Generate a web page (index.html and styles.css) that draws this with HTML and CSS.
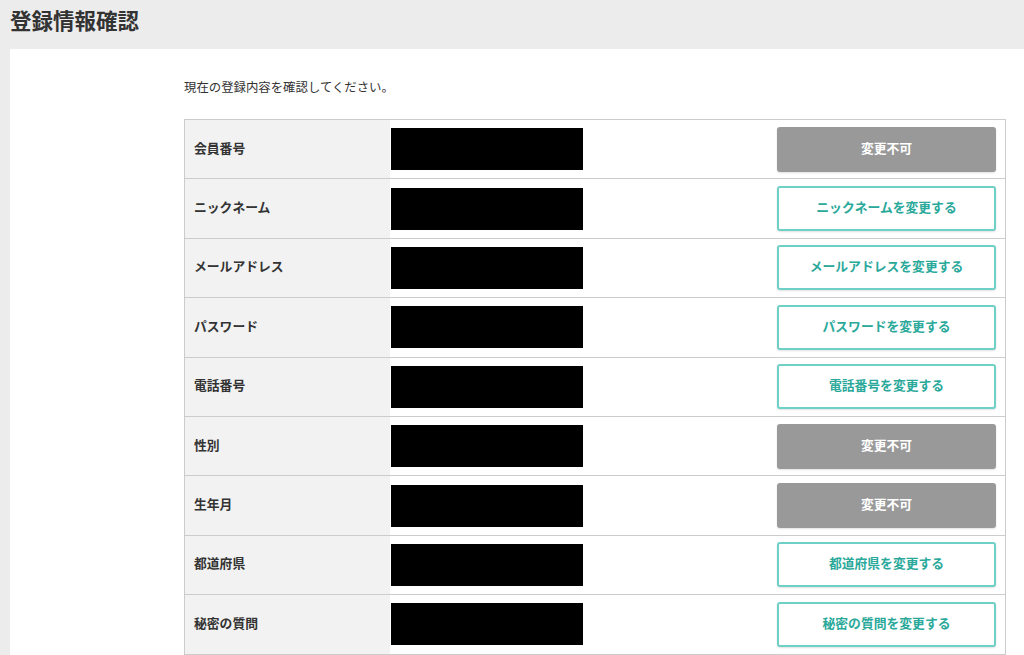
FILE: index.html
```html
<!DOCTYPE html>
<html lang="ja">
<head>
<meta charset="utf-8">
<title>登録情報確認</title>
<link rel="stylesheet" href="styles.css">
</head>
<body>
<header class="page-header">
  <h1 class="page-title">登録情報確認</h1>
</header>
<main class="panel">
  <p class="intro">現在の登録内容を確認してください。</p>
  <div class="info-table">
    <div class="row">
      <div class="label">会員番号</div>
      <div class="value"><span class="masked"></span></div>
      <div class="action"><span class="btn btn-disabled">変更不可</span></div>
    </div>
    <div class="row">
      <div class="label">ニックネーム</div>
      <div class="value"><span class="masked"></span></div>
      <div class="action"><a class="btn btn-change" href="#">ニックネームを変更する</a></div>
    </div>
    <div class="row">
      <div class="label">メールアドレス</div>
      <div class="value"><span class="masked"></span></div>
      <div class="action"><a class="btn btn-change" href="#">メールアドレスを変更する</a></div>
    </div>
    <div class="row">
      <div class="label">パスワード</div>
      <div class="value"><span class="masked"></span></div>
      <div class="action"><a class="btn btn-change" href="#">パスワードを変更する</a></div>
    </div>
    <div class="row">
      <div class="label">電話番号</div>
      <div class="value"><span class="masked"></span></div>
      <div class="action"><a class="btn btn-change" href="#">電話番号を変更する</a></div>
    </div>
    <div class="row">
      <div class="label">性別</div>
      <div class="value"><span class="masked"></span></div>
      <div class="action"><span class="btn btn-disabled">変更不可</span></div>
    </div>
    <div class="row">
      <div class="label">生年月</div>
      <div class="value"><span class="masked"></span></div>
      <div class="action"><span class="btn btn-disabled">変更不可</span></div>
    </div>
    <div class="row">
      <div class="label">都道府県</div>
      <div class="value"><span class="masked"></span></div>
      <div class="action"><a class="btn btn-change" href="#">都道府県を変更する</a></div>
    </div>
    <div class="row">
      <div class="label">秘密の質問</div>
      <div class="value"><span class="masked"></span></div>
      <div class="action"><a class="btn btn-change" href="#">秘密の質問を変更する</a></div>
    </div>
  </div>
</main>
</body>
</html>
```

FILE: styles.css
```css
* { box-sizing: border-box; }

html, body {
  margin: 0;
  padding: 0;
}

body {
  background: #ececec;
  color: #333333;
  font-family: "Noto Sans CJK JP", "Noto Sans", "Liberation Sans", sans-serif;
  overflow: hidden;
}

.page-header {
  height: 49px;
  padding: 0 10px;
}

.page-title {
  margin: 0;
  padding-top: 6px;
  font-size: 21.5px;
  line-height: 28px;
  font-weight: 700;
  color: #333333;
}

.panel {
  margin-left: 10px;
  background: #ffffff;
  padding: 29px 18px 40px 174px;
  min-height: 700px;
}

.intro {
  margin: 0 0 23px 0;
  font-size: 12.4px;
  line-height: 18px;
  color: #333333;
}

.info-table {
  border-top: 1px solid #cccccc;
  border-left: 1px solid #cccccc;
  border-right: 1px solid #cccccc;
}

.row {
  display: flex;
  align-items: stretch;
  height: 59.4px;
  border-bottom: 1px solid #cccccc;
}

.label {
  width: 205px;
  flex: none;
  background: #f2f2f2;
  display: flex;
  align-items: center;
  padding-left: 9px;
  padding-bottom: 4px;
  font-size: 12.8px;
  font-weight: 700;
  color: #333333;
}

.value {
  flex: 1;
  display: flex;
  align-items: center;
  padding-left: 1px;
}

.masked {
  display: block;
  width: 192px;
  height: 42px;
  background: #000000;
}

.action {
  display: flex;
  align-items: center;
  padding-right: 9px;
}

.btn {
  display: flex;
  align-items: center;
  justify-content: center;
  width: 219px;
  height: 45px;
  padding-bottom: 4px;
  border-radius: 3px;
  font-size: 12.8px;
  font-weight: 700;
  text-decoration: none;
  box-shadow: 0 1px 2px rgba(0, 0, 0, 0.12);
}

.btn-disabled {
  background: #999999;
  color: #ffffff;
}

.btn-change {
  background: #ffffff;
  border: 2px solid #6fd0c6;
  color: #2aa99b;
}
```
